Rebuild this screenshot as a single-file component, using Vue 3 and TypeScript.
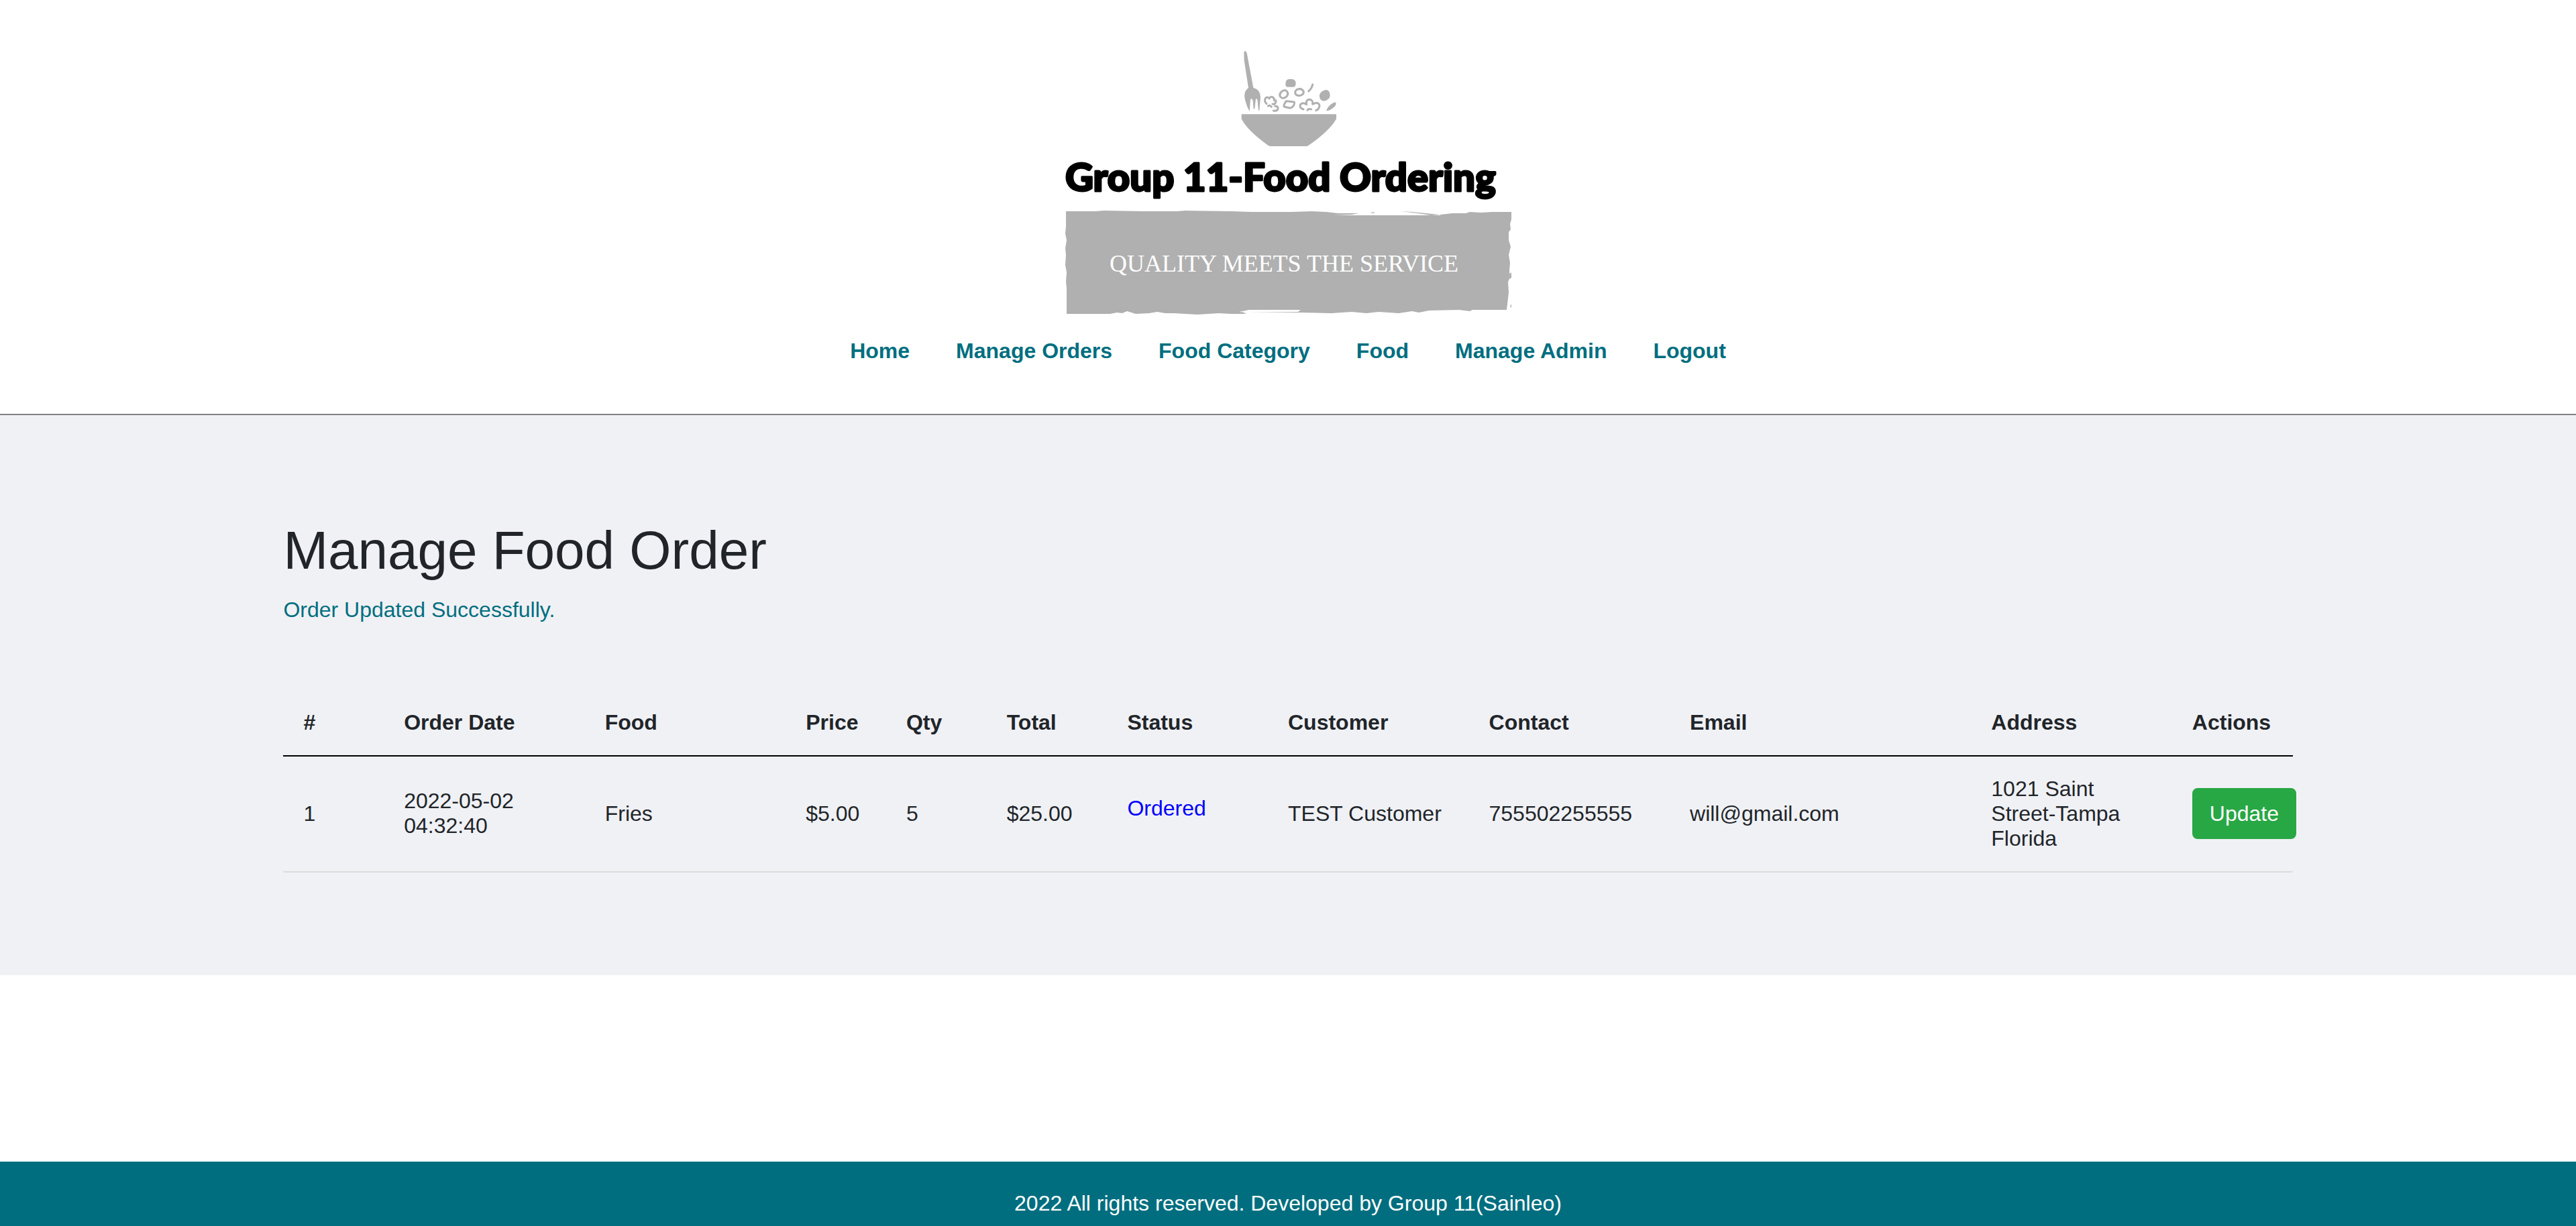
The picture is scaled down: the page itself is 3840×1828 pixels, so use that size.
<script setup lang="ts">
interface NavItem {
  label: string
  href: string
}

interface Order {
  id: number
  date: string
  food: string
  price: string
  qty: number
  total: string
  status: string
  customer: string
  contact: string
  email: string
  address: string
}

const navItems: NavItem[] = [
  { label: 'Home', href: '#home' },
  { label: 'Manage Orders', href: '#orders' },
  { label: 'Food Category', href: '#category' },
  { label: 'Food', href: '#food' },
  { label: 'Manage Admin', href: '#admin' },
  { label: 'Logout', href: '#logout' },
]

const columns: { label: string; width: number }[] = [
  { label: '#', width: 5 },
  { label: 'Order Date', width: 10 },
  { label: 'Food', width: 10 },
  { label: 'Price', width: 5 },
  { label: 'Qty', width: 5 },
  { label: 'Total', width: 6 },
  { label: 'Status', width: 8 },
  { label: 'Customer', width: 10 },
  { label: 'Contact', width: 10 },
  { label: 'Email', width: 15 },
  { label: 'Address', width: 10 },
  { label: 'Actions', width: 6 },
]

const orders: Order[] = [
  {
    id: 1,
    date: '2022-05-02 04:32:40',
    food: 'Fries',
    price: '$5.00',
    qty: 5,
    total: '$25.00',
    status: 'Ordered',
    customer: 'TEST Customer',
    contact: '755502255555',
    email: 'will@gmail.com',
    address: '1021 Saint Street-Tampa Florida',
  },
]
</script>

<template>
  <div class="page">
    <header class="header">
      <div class="logo">
        <svg class="bowl" viewBox="0 0 600 480" width="200" height="160" aria-hidden="true">
          <g fill="#b0b0b0">
            <path d="M92 331H516V352Q486 406 390 472Q387 474 382 474H222Q216 474 212 471Q120 406 92 352Z" />
            <path d="M103 55Q108 39 116 58L145 212Q178 222 177 256Q176 270 172 314H168L164 270Q160 258 156 262L151 307H146L143 270Q139 256 132 265L128 319Q116 298 110 274Q97 232 123 213L104 90Z" />
            <path d="M291 183Q294 173 313 173Q335 174 335 191Q334 208 326 209H297Q288 208 289 194Z" />
            <path d="M450 230Q476 212 486 234Q493 259 474 268Q453 278 443 261Q436 243 450 230Z" />
            <path d="M514 278Q518 292 500 304Q482 318 471 315Q476 299 488 290Q506 276 514 278Z" />
          </g>
          <g fill="none" stroke="#b0b0b0" stroke-width="9" stroke-linecap="round" stroke-linejoin="round">
            <path d="M410 198Q406 217 392 228" />
            <path d="M270 231Q287 217 296 230Q305 244 290 255Q272 265 264 250Q261 240 270 231Z" />
            <path d="M339 221Q361 212 370 230Q370 245 350 248Q331 246 332 234Q333 225 339 221Z" />
            <path d="M292 272L327 276Q331 279 325 293Q316 304 307 303L284 298Q279 296 285 283Z" />
            <path d="M204 284Q192 272 199 260Q207 250 216 261Q218 251 232 255Q240 261 238 269Q250 266 245 278Q239 289 231 285M211 294Q220 289 226 298M242 295Q258 295 255 307Q251 319 235 315" />
            <path d="M369 309Q349 302 355 288Q365 275 383 287Q378 267 395 265Q413 266 410 286Q435 272 441 292Q440 308 425 314M387 313Q388 305 404 309" />
          </g>
        </svg>
        <svg class="wordmark" viewBox="0 -10 670 250" width="670" height="250" role="img" aria-label="Group 11-Food Ordering, quality meets the service">
          <text class="brand" x="3" y="55">Group 11-Food Ordering</text>
          <g fill="#b0b0b0">
            <path d="M4 85L48 85L60 84L120 85L170 85L182 84L250 85L280 86L340 86L370 85L392 86L410 88L441 88L430 90L403 91L562 91V90L580 88L600 88L606 86L622 87L640 86L668 86L668 97L666 104L667 112L664 116L664 128L667 138L664 150L666 162L665 174L666 184L663 190L664 206L661 232L610 232L606 234L590 232L545 233L530 236L520 234L500 237L470 235L452 237L430 235L400 237L354 236L277 236L268 236L273 238L250 238L232 237L200 239L165 237L152 237L140 235L128 237L108 238L95 234L88 237L80 236L70 238L5 238L5 200L4 190L5 176L3 165L4 150L3 140L5 128L3 118L4 108Z" />
            <path d="M503 85L520 86L540 88L562 90L548 91L528 88ZM457 87L465 86L462 88ZM665 179L668 176L668 184L666 186ZM666 227L668 223V229Z" />
          </g>
          <path fill="#fff" d="M277 232H354L350 235L275 236L262 235Z" />
          <text class="tagline" x="69" y="175">QUALITY MEETS THE SERVICE</text>
        </svg>
      </div>
      <nav class="nav" aria-label="Main">
        <a v-for="item in navItems" :key="item.label" :href="item.href">{{ item.label }}</a>
      </nav>
    </header>

    <main class="main">
      <div class="wrapper">
        <h1>Manage Food Order</h1>
        <p class="message" role="status">Order Updated Successfully.</p>
        <table class="orders">
          <colgroup>
            <col v-for="col in columns" :key="col.label" :style="{ width: col.width + '%' }" />
          </colgroup>
          <thead>
            <tr>
              <th v-for="col in columns" :key="col.label" scope="col">{{ col.label }}</th>
            </tr>
          </thead>
          <tbody>
            <tr v-for="order in orders" :key="order.id">
              <td>{{ order.id }}</td>
              <td>{{ order.date }}</td>
              <td>{{ order.food }}</td>
              <td>{{ order.price }}</td>
              <td>{{ order.qty }}</td>
              <td>{{ order.total }}</td>
              <td><span class="status">{{ order.status }}</span></td>
              <td>{{ order.customer }}</td>
              <td>{{ order.contact }}</td>
              <td>{{ order.email }}</td>
              <td class="address">{{ order.address }}</td>
              <td class="actions"><button type="button" class="btn">Update</button></td>
            </tr>
          </tbody>
        </table>
      </div>
    </main>

    <footer class="footer">2022 All rights reserved. Developed by Group 11(Sainleo)</footer>
  </div>
</template>

<style>
body {
  margin: 0;
  background: #fff;
}
</style>

<style scoped>
.page {
  display: flex;
  flex-direction: column;
  min-height: 100vh;
  box-sizing: border-box;
  font-family: "Liberation Sans", Arial, sans-serif;
  font-size: 32px;
  line-height: 48px;
  color: #212529;
}

.header {
  display: flex;
  flex-direction: column;
  align-items: center;
  padding: 60px 0 70px;
  border-bottom: 2px solid #808080;
}

.logo {
  display: flex;
  flex-direction: column;
  align-items: center;
}

.bowl,
.wordmark {
  display: block;
}

.brand {
  fill: #000;
  stroke: #000;
  stroke-width: 3px;
  stroke-linejoin: round;
  font-family: Lato, "Open Sans", sans-serif;
  font-size: 58px;
  font-weight: 900;
}

.tagline {
  fill: #fff;
  font-family: "Liberation Serif", serif;
  font-size: 36px;
}

.nav {
  display: flex;
  gap: 69px;
  margin-top: 29px;
}

.nav a {
  color: #006e7f;
  font-weight: 700;
  text-decoration: none;
}

.main {
  padding: 4% 0;
  background: #f0f1f5;
}

.wrapper {
  width: 78%;
  margin: 0 auto;
}

h1 {
  margin: 0 0 16px;
  font-size: 80px;
  font-weight: 500;
  line-height: 96px;
}

.message {
  margin: 0 0 96px;
  color: #006e7f;
}

.orders {
  width: 100%;
  table-layout: fixed;
  border-collapse: separate;
  border-spacing: 0;
  line-height: 37px;
}

th,
td {
  padding: 30px 0 30px 30px;
  text-align: left;
  vertical-align: middle;
}

th {
  border-bottom: 2px solid #000;
  font-weight: 700;
}

td {
  border-bottom: 2px solid #dcdcdc;
}

.address {
  padding-right: 30px;
}

.actions {
  padding-top: 0;
  padding-bottom: 0;
}

.status {
  display: inline-block;
  margin-bottom: 16px;
  color: #00f;
}

.btn {
  padding: 12px 24px;
  border: 2px solid #28a745;
  border-radius: 8px;
  background: #28a745;
  color: #fff;
  font: inherit;
  line-height: 48px;
}

.footer {
  margin-top: auto;
  padding: 38px 0 10px;
  background: #006e7f;
  color: #fff;
  text-align: center;
}
</style>
